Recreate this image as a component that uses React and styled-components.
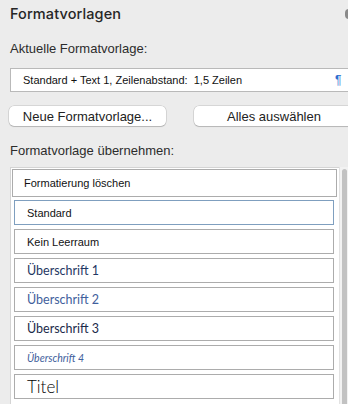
import React from "react"
import styled, { createGlobalStyle } from "styled-components"

const GlobalStyle = createGlobalStyle`
  html, body {
    margin: 0;
    padding: 0;
    background: #ececec;
    overflow: hidden;
  }
  body {
    font-family: "Liberation Sans", Arial, sans-serif;
    color: #222;
  }
`

const Panel = styled.div`
  position: relative;
  width: 348px;
  height: 404px;
  padding-left: 10px;
  box-sizing: border-box;
  display: flex;
  flex-direction: column;
  overflow: hidden;
`

const Title = styled.h1`
  margin: 4px 0 0;
  font-family: Inter, "Liberation Sans", sans-serif;
  font-size: 14.5px;
  font-weight: 500;
  line-height: 20px;
  color: #262626;
  letter-spacing: 0.1px;
`

const CloseDot = styled.span`
  position: absolute;
  top: 9px;
  right: -5px;
  width: 8px;
  height: 10px;
  border-radius: 4px;
  background: #8a8a8a;
`

const Label = styled.div`
  margin-top: ${p => p.$top}px;
  font-size: 13px;
  line-height: 18px;
  color: #2c2c2c;
`

const CurrentBox = styled.div`
  position: relative;
  flex: none;
  margin-top: 10px;
  width: 360px;
  height: 24px;
  box-sizing: border-box;
  background: #fff;
  border: 1px solid #b9b9b9;
  display: flex;
  align-items: center;
  padding-left: 12px;
  font-size: 11px;
  color: #111;
`

const Pilcrow = styled.span`
  position: absolute;
  left: 324px;
  top: 4px;
  color: #2f6fd0;
  font-size: 12px;
`

const ButtonRow = styled.div`
  margin-top: 14px;
  display: flex;
  gap: 29px;
`

const Button = styled.button`
  flex: none;
  width: ${p => p.$w}px;
  height: 20px;
  margin-left: -1px;
  background: #fff;
  border: none;
  border-radius: 5px;
  box-shadow: 0 0 0 0.5px rgba(0, 0, 0, 0.18), 0 1px 1px rgba(0, 0, 0, 0.15);
  font-family: "Liberation Sans", Arial, sans-serif;
  font-size: 13px;
  color: #222;
  padding: 0;
`

const ListArea = styled.div`
  margin-top: 7px;
  flex: 1;
  display: flex;
`

const List = styled.div`
  width: 329px;
  box-sizing: border-box;
  background: #fff;
  border-top: 1px solid #d4d4d4;
  border-left: 1px solid #d4d4d4;
  padding: 1px 2px 0 1px;
  display: flex;
  flex-direction: column;
  gap: 4px;
`

const Item = styled.div`
  flex: none;
  height: ${p => (p.$clear ? 28 : 25)}px;
  margin: ${p => (p.$clear ? "0 0 -1px 0" : "0 3px 0 2px")};
  box-sizing: border-box;
  border: 1px solid ${p => (p.$active ? "#7f9fbf" : "#acacac")};
  display: flex;
  align-items: center;
  padding-left: ${p => (p.$clear ? 11 : 12)}px;
  font-family: ${p => p.$font || '"Liberation Sans", Arial, sans-serif'};
  font-size: ${p => p.$size || 11}px;
  font-weight: ${p => p.$weight || 400};
  font-style: ${p => (p.$italic ? "italic" : "normal")};
  color: ${p => p.$color || "#111"};
  white-space: nowrap;
`

const Scrollbar = styled.div`
  width: 9px;
  background: #f2f2f2;
  border-left: 1px solid #e2e2e2;
  box-sizing: border-box;
  padding: 2px 1px 0 2px;
`

const Thumb = styled.div`
  height: 100%;
  background: #c2c2c2;
  border-radius: 3px 3px 0 0;
`

const heading = "Lato, \"Liberation Sans\", sans-serif"

const styles = [
  { name: "Standard", active: true },
  { name: "Kein Leerraum" },
  { name: "Überschrift 1", size: 12.5, color: "#1f3763", font: heading },
  { name: "Überschrift 2", size: 12.5, color: "#41609c", font: heading },
  { name: "Überschrift 3", size: 12.5, color: "#1b2a4a", font: heading },
  { name: "Überschrift 4", size: 10.5, color: "#41609c", italic: true, font: heading },
  { name: "Titel", size: 17, color: "#000", font: heading, weight: 300 },
]

const App = () => (
  <Panel>
    <GlobalStyle />
    <Title>Formatvorlagen</Title>
    <CloseDot />
    <Label $top={16}>Aktuelle Formatvorlage:</Label>
    <CurrentBox>
      Standard + Text 1, Zeilenabstand:&nbsp; 1,5 Zeilen
      <Pilcrow>¶</Pilcrow>
    </CurrentBox>
    <ButtonRow>
      <Button $w={157}>Neue Formatvorlage...</Button>
      <Button $w={160}>Alles auswählen</Button>
    </ButtonRow>
    <Label $top={16}>Formatvorlage übernehmen:</Label>
    <ListArea>
      <List>
        <Item $clear>Formatierung löschen</Item>
        {styles.map(s => (
          <Item
            key={s.name}
            $active={s.active}
            $size={s.size}
            $color={s.color}
            $italic={s.italic}
            $font={s.font}
            $weight={s.weight}
          >
            {s.name}
          </Item>
        ))}
      </List>
      <Scrollbar>
        <Thumb />
      </Scrollbar>
    </ListArea>
  </Panel>
)

export default App
